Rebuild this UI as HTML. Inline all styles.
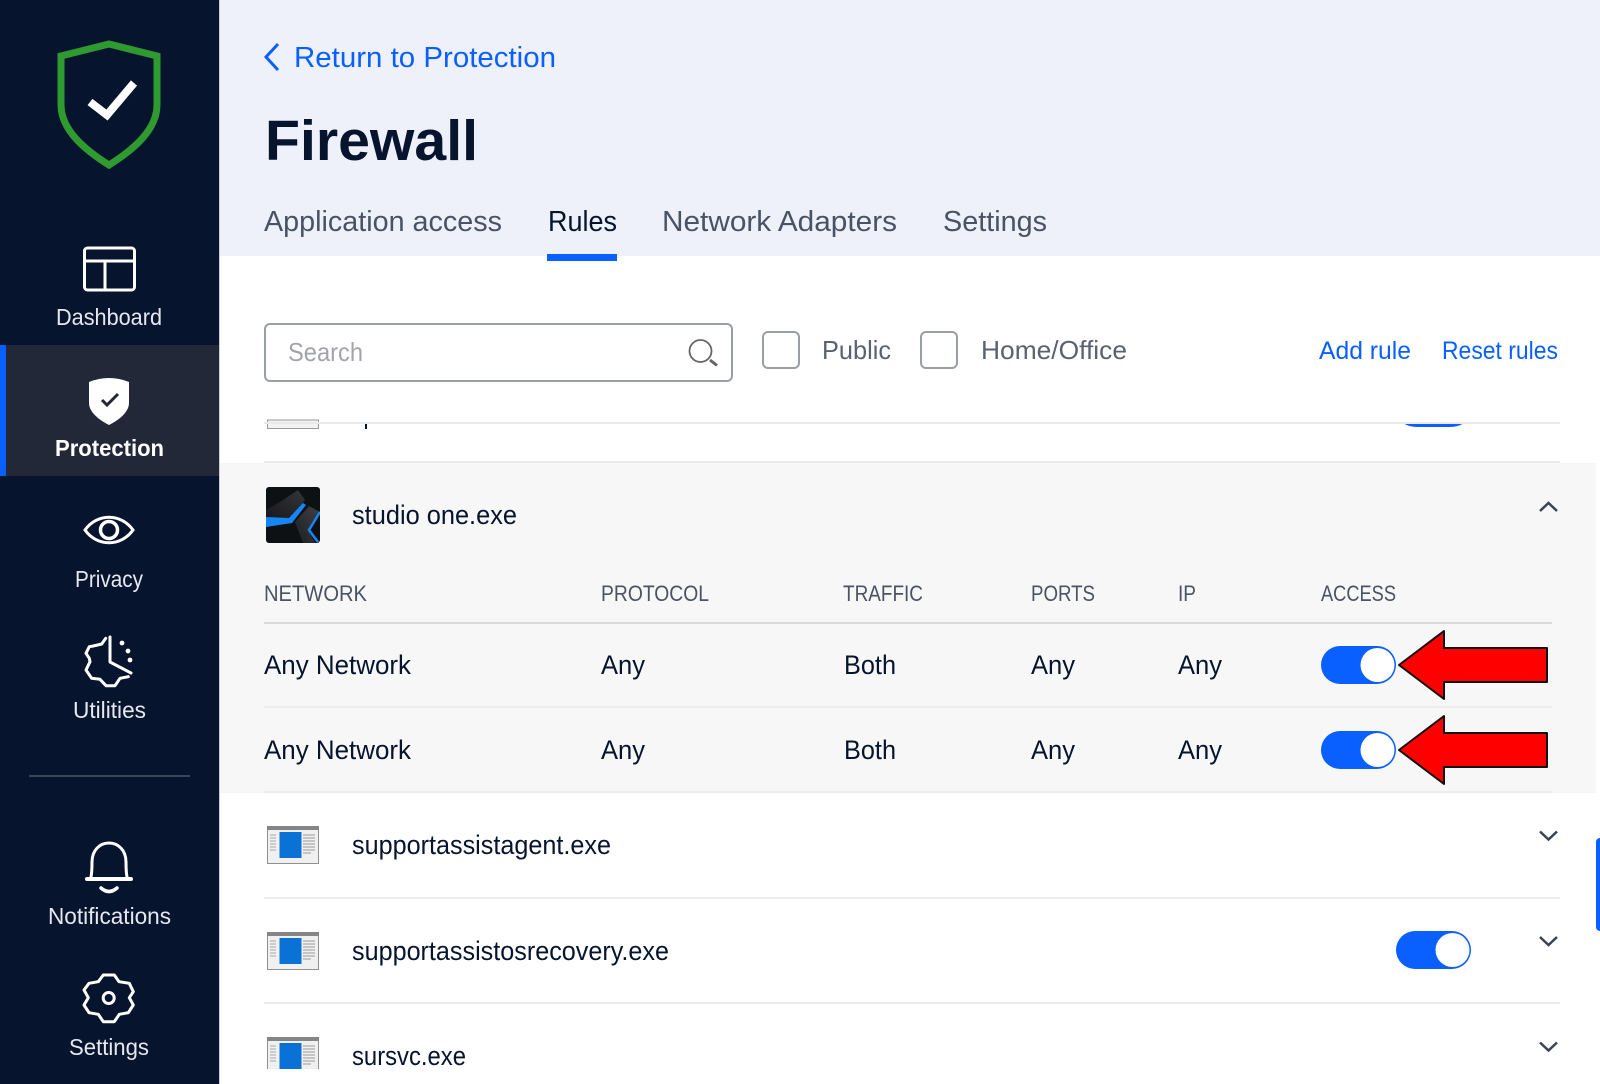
<!DOCTYPE html>
<html><head><meta charset="utf-8"><title>Firewall</title>
<style>
html,body{margin:0;padding:0;background:#fff;width:1600px;height:1084px;overflow:hidden}
svg{display:block}
text{font-family:"Liberation Sans",sans-serif}
</style></head><body>
<svg width="1600" height="1084" viewBox="0 0 1600 1084" xmlns="http://www.w3.org/2000/svg">
<defs>
<g id="app">
<rect x="0.5" y="0.5" width="51" height="37" fill="#f0f0f0" stroke="#8f8f8f"/>
<rect x="0" y="0" width="52" height="4" fill="#858585"/>
<rect x="12.500" y="6" width="22" height="26" fill="#0a72d6"/>
<path d="M3 9h6M3 12h6M3 15h6M3 18h6M3 21h6M3 24h6" stroke="#a8a8a8" stroke-width="1"/>
<path d="M36 9h12M36 12h12M36 15h12M36 18h12M36 21h12M36 24h12M36 27h8" stroke="#9a9a9a" stroke-width="1"/>
</g>
<g id="tog">
<rect x="0" y="0" width="75" height="38" rx="19" fill="#0a5fff"/>
<circle cx="56.500" cy="19" r="17" fill="#fff"/>
</g>
<path id="arrow" d="M1399 665L1444 631V648H1547V682H1444V699Z" fill="#fe0000" stroke="#111" stroke-width="2" stroke-linejoin="round"/>
<linearGradient id="g1" x1="0" y1="1" x2="1" y2="0"><stop offset="0" stop-color="#17191c"/><stop offset="1" stop-color="#34363b"/></linearGradient>
<linearGradient id="g2" x1="1" y1="0" x2="0" y2="1"><stop offset="0" stop-color="#3e4046"/><stop offset="1" stop-color="#1d1f22"/></linearGradient>
<clipPath id="sc"><rect x="266" y="487" width="54" height="56" rx="3"/></clipPath>
</defs>

<rect width="1600" height="1084" fill="#fff"/>
<rect x="220" width="1380" height="256" fill="#eef1f9"/>
<rect width="219" height="1084" fill="#06142e"/>
<rect x="219" width="1" height="1084" fill="#c8ccd6"/>
<rect y="345" width="219" height="131" fill="#222838"/>
<rect y="345" width="6" height="131" fill="#0a5fff"/>

<!-- logo -->
<path d="M109 44L61 56V105C61 130 85 150 109 165C133 150 157 130 157 105V56Z" fill="none" stroke="#2f9a2f" stroke-width="7"/>
<path d="M90 102L107 115L134 83" fill="none" stroke="#fff" stroke-width="8"/>

<!-- dashboard -->
<g fill="none" stroke="#fff" stroke-width="3" stroke-linejoin="round">
<rect x="84.500" y="248" width="50" height="42" rx="3"/>
<path d="M85 261H134M105 261V290"/>
</g>
<text x="56" y="325" font-size="23" fill="#e6e8ee" textLength="106" lengthAdjust="spacingAndGlyphs">Dashboard</text>

<!-- protection -->
<path d="M89 382Q109 374 129 382V403C129 412 119 420 109 425C99 420 89 412 89 403Z" fill="#fff"/>
<path d="M102 400L107 405L118 394" fill="none" stroke="#222838" stroke-width="3"/>
<text x="55" y="456" font-size="23" font-weight="700" fill="#fff" textLength="109" lengthAdjust="spacingAndGlyphs">Protection</text>

<!-- privacy -->
<path d="M85 530C97 513 121 513 133 530C121 547 97 547 85 530Z" fill="none" stroke="#fff" stroke-width="3"/>
<circle cx="109" cy="530" r="8.500" fill="none" stroke="#fff" stroke-width="3.500"/>
<text x="75" y="587" font-size="23" fill="#e6e8ee" textLength="68" lengthAdjust="spacingAndGlyphs">Privacy</text>

<!-- utilities -->
<g fill="none" stroke="#fff" stroke-width="3" stroke-linejoin="round" stroke-linecap="round">
<path d="M105.700 638.300L101.700 644L93.300 646L89.300 646.700L86 653.300L89.300 658.300L90 661.700L86 670L91.700 678.300L100 679.300L106 685.700H115L120 678.300L128.300 676.700"/>
<path d="M110 637V662L131 673"/>
</g>
<circle cx="122" cy="643" r="2.400" fill="#fff"/><circle cx="128" cy="651" r="2.400" fill="#fff"/><circle cx="130" cy="660" r="2.400" fill="#fff"/>
<text x="73" y="718" font-size="23" fill="#e6e8ee" textLength="73" lengthAdjust="spacingAndGlyphs">Utilities</text>

<rect x="29" y="775" width="161" height="2" fill="#3b4559"/>

<!-- bell -->
<g fill="none" stroke="#fff" stroke-width="3" stroke-linecap="round">
<path d="M91 877C92 872 92 868 92 862C92 850 100 843 109 843C118 843 126 850 126 862C126 868 126 872 127 877"/>
<path d="M87 879H131" stroke-width="4"/>
<path d="M101 888Q109 895 117 888" stroke-width="3.500"/>
</g>
<text x="48" y="924" font-size="23" fill="#e6e8ee" textLength="123" lengthAdjust="spacingAndGlyphs">Notifications</text>

<!-- gear -->
<path d="M103.300 975H114.300L119 981.700L129.300 983.300L133.300 991.700L129.300 997.700L133.300 1005L128.300 1012.700L119.300 1014.300L114.300 1021.700H103.300L98.300 1014.300L89 1012.700L84 1005L88.300 997.700L84 990L89 983.300L98.300 981.700Z" fill="none" stroke="#fff" stroke-width="3" stroke-linejoin="round"/>
<circle cx="108.700" cy="998" r="5.500" fill="none" stroke="#fff" stroke-width="3"/>
<text x="69" y="1055" font-size="23" fill="#e6e8ee" textLength="80" lengthAdjust="spacingAndGlyphs">Settings</text>

<!-- header -->
<path d="M278 44L266 57L278 70" fill="none" stroke="#0a5fff" stroke-width="3"/>
<text x="294" y="67" font-size="29" fill="#0a5fff" textLength="262" lengthAdjust="spacingAndGlyphs">Return to Protection</text>
<text x="265" y="160" font-size="57" font-weight="700" fill="#06142e" textLength="213" lengthAdjust="spacingAndGlyphs">Firewall</text>
<text x="264" y="231" font-size="29" fill="#4a5364" textLength="238" lengthAdjust="spacingAndGlyphs">Application access</text>
<text x="548" y="231" font-size="29" fill="#06142e" textLength="69" lengthAdjust="spacingAndGlyphs">Rules</text>
<text x="662" y="231" font-size="29" fill="#4a5364" textLength="235" lengthAdjust="spacingAndGlyphs">Network Adapters</text>
<text x="943" y="231" font-size="29" fill="#4a5364" textLength="104" lengthAdjust="spacingAndGlyphs">Settings</text>
<rect x="547" y="254" width="70" height="7" fill="#0a5fff"/>

<!-- toolbar -->
<rect x="265" y="324" width="467" height="57" rx="5" fill="#fff" stroke="#9b9ea3" stroke-width="2"/>
<text x="288" y="361" font-size="26" fill="#a2a4aa" textLength="75" lengthAdjust="spacingAndGlyphs">Search</text>
<circle cx="700.500" cy="351" r="11" fill="none" stroke="#666" stroke-width="1.800"/>
<path d="M710 360L717 365.500" stroke="#666" stroke-width="3"/>
<rect x="763" y="332" width="36" height="36" rx="5" fill="#fff" stroke="#9b9ea3" stroke-width="2"/>
<text x="822" y="359" font-size="26" fill="#5a6272" textLength="69" lengthAdjust="spacingAndGlyphs">Public</text>
<rect x="921" y="332" width="36" height="36" rx="5" fill="#fff" stroke="#9b9ea3" stroke-width="2"/>
<text x="981" y="359" font-size="26" fill="#5a6272" textLength="146" lengthAdjust="spacingAndGlyphs">Home/Office</text>
<text x="1319" y="359" font-size="25" fill="#0a5fff" textLength="92" lengthAdjust="spacingAndGlyphs">Add rule</text>
<text x="1442" y="359" font-size="25" fill="#0a5fff" textLength="116" lengthAdjust="spacingAndGlyphs">Reset rules</text>

<!-- clipped row -->
<rect x="267.500" y="420" width="51" height="8.500" fill="#f2f2f2" stroke="#9a9a9a"/>
<rect x="365" y="424" width="2" height="5" fill="#06142e"/>
<path d="M1403 423H1464Q1458 427 1450 427H1417Q1409 427 1403 423Z" fill="#0a5fff"/>
<rect x="264" y="422" width="1296" height="2" fill="#e9e9e9"/>
<rect x="264" y="461" width="1296" height="2" fill="#e9e9e9"/>

<!-- expanded -->
<rect x="220" y="463" width="1376" height="330" fill="#f7f7f7"/>
<g clip-path="url(#sc)">
<rect x="266" y="487" width="54" height="56" fill="#0d1114"/>
<path d="M280 502L298 490L305 500L292 518H266V510Z" fill="url(#g1)"/>
<path d="M295 522L309 506L320 512L308 530L315 543H303Z" fill="url(#g2)"/>
<path d="M266 517V527L292 523L306 505L303 503L289 518Z" fill="#1685f5"/>
<path d="M320 512L309 530L318 542" fill="none" stroke="#1685f5" stroke-width="2.500"/>
</g>
<text x="352" y="524" font-size="27" fill="#06142e" textLength="165" lengthAdjust="spacingAndGlyphs">studio one.exe</text>
<path d="M1540 511L1548.500 503L1557 511" fill="none" stroke="#3a4456" stroke-width="2.500"/>

<g font-size="22" fill="#4a5364">
<text x="264" y="601" textLength="103" lengthAdjust="spacingAndGlyphs">NETWORK</text>
<text x="601" y="601" textLength="108" lengthAdjust="spacingAndGlyphs">PROTOCOL</text>
<text x="843" y="601" textLength="80" lengthAdjust="spacingAndGlyphs">TRAFFIC</text>
<text x="1031" y="601" textLength="64" lengthAdjust="spacingAndGlyphs">PORTS</text>
<text x="1178" y="601" textLength="18" lengthAdjust="spacingAndGlyphs">IP</text>
<text x="1321" y="601" textLength="75" lengthAdjust="spacingAndGlyphs">ACCESS</text>
</g>
<rect x="264" y="622" width="1288" height="2" fill="#d9d9d9"/>

<g font-size="27" fill="#06142e">
<text x="264" y="674" textLength="147" lengthAdjust="spacingAndGlyphs">Any Network</text>
<text x="601" y="674" textLength="44" lengthAdjust="spacingAndGlyphs">Any</text>
<text x="844" y="674" textLength="52" lengthAdjust="spacingAndGlyphs">Both</text>
<text x="1031" y="674" textLength="44" lengthAdjust="spacingAndGlyphs">Any</text>
<text x="1178" y="674" textLength="44" lengthAdjust="spacingAndGlyphs">Any</text>
<text x="264" y="759" textLength="147" lengthAdjust="spacingAndGlyphs">Any Network</text>
<text x="601" y="759" textLength="44" lengthAdjust="spacingAndGlyphs">Any</text>
<text x="844" y="759" textLength="52" lengthAdjust="spacingAndGlyphs">Both</text>
<text x="1031" y="759" textLength="44" lengthAdjust="spacingAndGlyphs">Any</text>
<text x="1178" y="759" textLength="44" lengthAdjust="spacingAndGlyphs">Any</text>
</g>
<rect x="264" y="706" width="1288" height="2" fill="#ececec"/>
<rect x="264" y="791" width="1288" height="2" fill="#ececec"/>
<use href="#tog" x="1321" y="646"/>
<use href="#tog" x="1321" y="731"/>
<use href="#arrow"/>
<use href="#arrow" y="85"/>

<!-- rows -->
<use href="#app" x="267" y="826"/>
<text x="352" y="854" font-size="27" fill="#06142e" textLength="259" lengthAdjust="spacingAndGlyphs">supportassistagent.exe</text>
<path d="M1540 831.500L1548.500 839.500L1557 831.500" fill="none" stroke="#3a4456" stroke-width="2.500"/>
<rect x="264" y="897" width="1296" height="2" fill="#ececec"/>

<use href="#app" x="267" y="932"/>
<text x="352" y="960" font-size="27" fill="#06142e" textLength="317" lengthAdjust="spacingAndGlyphs">supportassistosrecovery.exe</text>
<use href="#tog" x="1396" y="931"/>
<path d="M1540 937L1548.500 945L1557 937" fill="none" stroke="#3a4456" stroke-width="2.500"/>
<rect x="264" y="1002" width="1296" height="2" fill="#ececec"/>

<svg x="267" y="1037" width="52" height="32" overflow="hidden"><use href="#app"/></svg>
<text x="352" y="1065" font-size="27" fill="#06142e" textLength="114" lengthAdjust="spacingAndGlyphs">sursvc.exe</text>
<path d="M1540 1042.500L1548.500 1050.500L1557 1042.500" fill="none" stroke="#3a4456" stroke-width="2.500"/>

<rect x="1596" y="838" width="8" height="93" rx="4" fill="#0a5fff"/>
</svg>
</body></html>
